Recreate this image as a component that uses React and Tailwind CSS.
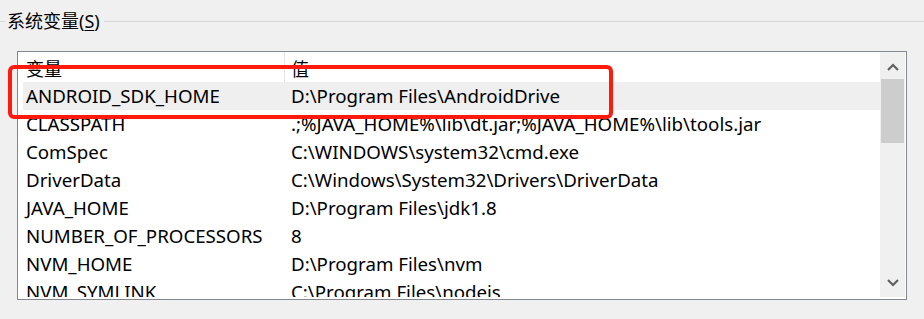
const rows = [
  ["ANDROID_SDK_HOME", "D:\\Program Files\\AndroidDrive"],
  ["CLASSPATH", ".;%JAVA_HOME%\\lib\\dt.jar;%JAVA_HOME%\\lib\\tools.jar"],
  ["ComSpec", "C:\\WINDOWS\\system32\\cmd.exe"],
  ["DriverData", "C:\\Windows\\System32\\Drivers\\DriverData"],
  ["JAVA_HOME", "D:\\Program Files\\jdk1.8"],
  ["NUMBER_OF_PROCESSORS", "8"],
  ["NVM_HOME", "D:\\Program Files\\nvm"],
  ["NVM_SYMLINK", "C:\\Program Files\\nodejs"],
];

function Chevron({ up }) {
  return (
    <svg width="12" height="8" viewBox="0 0 12 8">
      <path
        d={up ? "M1 7 L6 2 L11 7" : "M1 1 L6 6 L11 1"}
        fill="none"
        stroke="#606060"
        strokeWidth="2.2"
      />
    </svg>
  );
}

export default function App() {
  return (
    <div
      className="relative h-[319px] w-[924px] overflow-hidden bg-[#f0f0f0] text-[18px] text-black"
      style={{ fontFamily: '"Noto Sans", "Noto Sans CJK SC", sans-serif' }}
    >
      {/* group title */}
      <div className="flex h-[44px] items-center pb-[2px]">
        <div className="h-px w-[5px] bg-[#d5d5d5]" />
        <span className="px-[2px] leading-none">
          系统变量(<span className="underline underline-offset-2">S</span>)
        </span>
        <div className="ml-[2px] h-px flex-1 bg-[#d5d5d5]" />
      </div>

      {/* list view */}
      <div className="ml-[17px] mt-[7px] h-[249px] w-[890px] border border-[#828790] bg-white">
        <div className="flex h-full pb-[2px] pr-px">
          <div className="flex-1 overflow-hidden pl-[5px]">
            <div className="flex h-[30px] items-center">
              <div className="h-full w-[262px] border-r border-[#e5e5e5] pl-[3px] pt-[4px]">变量</div>
              <div className="h-full pl-[6px] pt-[4px]">值</div>
            </div>
            {rows.map(([name, value], i) => (
              <div
                key={name}
                className={`flex h-[28px] items-center whitespace-nowrap text-[18.7px] ${i === 0 ? "bg-[#efefef]" : ""}`}
              >
                <div className="w-[262px] pl-[3px]">{name}</div>
                <div className="pl-[6px]">{value}</div>
              </div>
            ))}
          </div>
          {/* scrollbar */}
          <div className="flex w-[25px] flex-col bg-[#f0f0f0]">
            <div className="flex h-[27px] items-center justify-center pt-[3px]">
              <Chevron up />
            </div>
            <div className="mx-px h-[64px] bg-[#cdcdcd]" />
            <div className="flex-1" />
            <div className="flex h-[26px] items-center justify-center pb-[3px]">
              <Chevron />
            </div>
          </div>
        </div>
      </div>

      {/* red annotation box */}
      <div className="absolute left-[8px] top-[65px] h-[54px] w-[605px] rounded-[6px] border-[4px] border-[#ff1a0e]" />
    </div>
  );
}
